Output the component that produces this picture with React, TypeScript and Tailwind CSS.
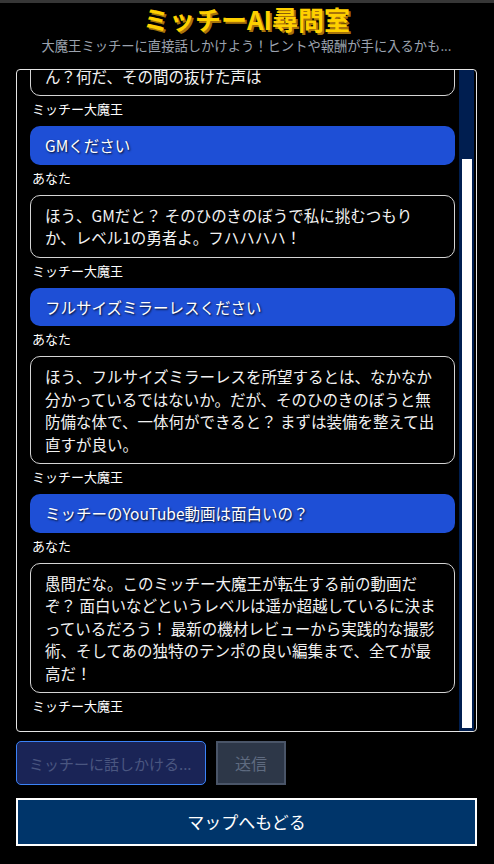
import React from 'react';

type Msg = { from: 'ai' | 'me'; text: string };

const MESSAGES: Msg[] = [
  { from: 'me', text: 'こんにちは' },
  { from: 'ai', text: 'ん？何だ、その間の抜けた声は' },
  { from: 'me', text: 'GMください' },
  { from: 'ai', text: 'ほう、GMだと？ そのひのきのぼうで私に挑むつもりか、レベル1の勇者よ。フハハハハ！' },
  { from: 'me', text: 'フルサイズミラーレスください' },
  {
    from: 'ai',
    text: 'ほう、フルサイズミラーレスを所望するとは、なかなか分かっているではないか。だが、そのひのきのぼうと無防備な体で、一体何ができると？ まずは装備を整えて出直すが良い。',
  },
  { from: 'me', text: 'ミッチーのYouTube動画は面白いの？' },
  {
    from: 'ai',
    text: '愚問だな。このミッチー大魔王が転生する前の動画だぞ？ 面白いなどというレベルは遥か超越しているに決まっているだろう！ 最新の機材レビューから実践的な撮影術、そしてあの独特のテンポの良い編集まで、全てが最高だ！',
  },
];

const Bubble: React.FC<{ msg: Msg }> = ({ msg }) => {
  const isMe = msg.from === 'me';
  return (
    <div className="flex flex-col">
      <div
        className={
          isMe
            ? 'rounded-[10px] bg-[#1e4fd6] px-[15px] py-2 text-[15.5px] leading-[22.5px] text-white [text-shadow:1px_1px_2px_rgba(0,0,0,0.85)]'
            : 'rounded-[10px] border border-[#d4d4d4] bg-black px-[14px] py-2 text-[15.5px] leading-[22.5px] text-[#f2f2f2]'
        }
      >
        {msg.text}
      </div>
      <div className="mt-1 ml-[2px] text-[13px] leading-[18px] text-white">
        {isMe ? 'あなた' : 'ミッチー大魔王'}
      </div>
    </div>
  );
};

export default function App() {
  return (
    <div
      className="min-h-screen bg-black border-t-[3px] border-[#363636] pl-4 pr-[17px] flex flex-col"
      style={{ fontFamily: '"Noto Sans CJK JP", "Noto Sans", sans-serif' }}
    >
      {/* Header */}
      <h1 className="text-center text-[26px] leading-[32px] font-bold text-[#ffd000] [text-shadow:2px_2px_0_#a8740a]">
        ミッチーAI尋問室
      </h1>
      <p className="text-center text-[13.3px] leading-[22px] text-[#9ca3af]">
        大魔王ミッチーに直接話しかけよう！ヒントや報酬が手に入るかも...
      </p>

      {/* Chat log */}
      <div className="mt-3 h-[663px] rounded-[4px] border border-[#e5e5e5] flex overflow-hidden">
        <div className="flex-1 min-w-0 overflow-hidden flex flex-col justify-end gap-2 pl-[13px] pr-[4px] pb-4">
          {MESSAGES.map((m, i) => (
            <Bubble key={i} msg={m} />
          ))}
        </div>
        {/* scrollbar */}
        <div className="w-[15px] mr-[2px] bg-[#001e50] flex flex-col pl-[3px] pr-[2px] pb-[3px]">
          <div className="mt-auto h-[569px] bg-white" />
        </div>
      </div>

      {/* Input row */}
      <div className="mt-[9px] flex gap-[10px]">
        <input
          className="w-[190px] h-[44px] rounded-[5px] border border-[#3b82f6] bg-[#1a2456] pl-3 pr-1 text-[15px] text-white placeholder:text-[#4a5680] outline-none"
          placeholder="ミッチーに話しかける..."
          disabled
        />
        <button
          className="w-[70px] h-[44px] border-2 border-[#4a5568] bg-[#2d3748] text-[16px] text-[#5f6b80]"
          disabled
        >
          送信
        </button>
      </div>

      {/* Back button */}
      <button className="mt-[13px] h-[48px] border-2 border-white bg-[#00356a] text-[17px] text-white">
        マップへもどる
      </button>
    </div>
  );
}
